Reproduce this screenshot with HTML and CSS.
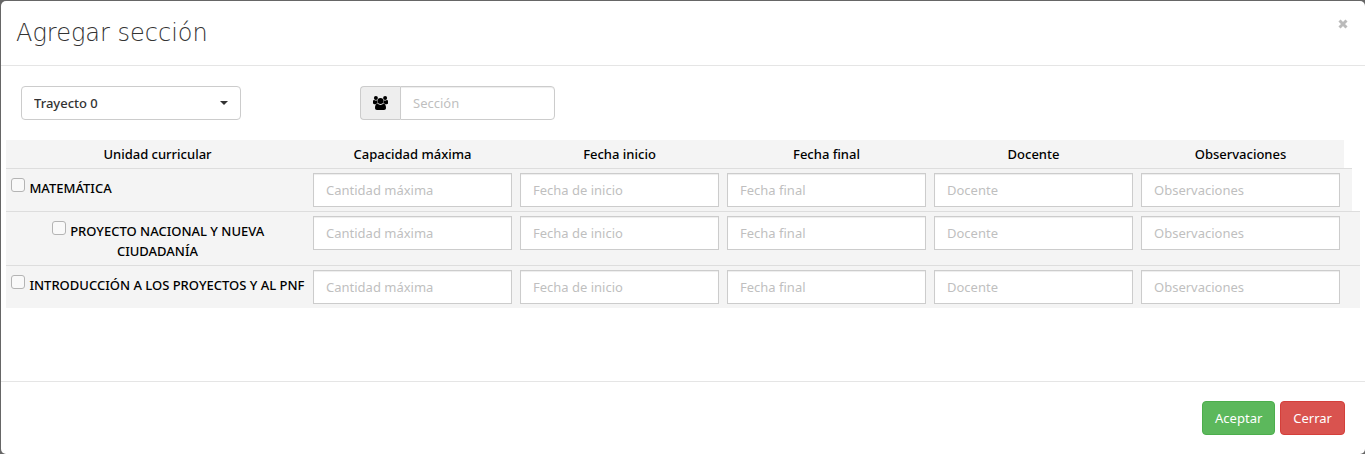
FILE: index.html
```
<!DOCTYPE html>
<html lang="es">
<head>
<meta charset="utf-8">
<title>Agregar sección</title>
<link rel="stylesheet" href="styles.css">
</head>
<body>
<div class="modal" role="dialog" aria-labelledby="modal-title">
  <header class="modal-header">
    <h1 class="modal-title" id="modal-title">Agregar sección</h1>
    <button class="close" type="button" aria-label="Cerrar ventana">
      <svg width="10" height="10" viewBox="0 0 10 10" aria-hidden="true"><path d="M1.500 1.500l7 7M8.500 1.500l-7 7" stroke="currentColor" stroke-width="3"/></svg>
    </button>
  </header>
  <main class="modal-body">
    <div class="filters">
      <div class="filter">
        <select class="select" aria-label="Trayecto"><option>Trayecto 0</option></select>
        <svg class="caret" width="8" height="4" viewBox="0 0 8 4" aria-hidden="true"><path d="M0 0h8L4 4z"/></svg>
      </div>
      <div class="input-group">
        <label class="addon" for="seccion" aria-label="Sección">
          <svg width="15" height="14" viewBox="0 0 15 14" aria-hidden="true">
            <circle cx="2.9" cy="2" r="2"/><circle cx="12.1" cy="2" r="2"/>
            <path d="M0 5.6C0 4.5.4 3.8 1.2 3.9 2.3 4.8 3.4 4.7 4.3 4.3 4.2 5.8 4.4 6.5 5 7.3 4 7.4 3.400 7.700 2.900 8.200H1.300C.5 8.200 0 7.800 0 7zM15 5.600C15 4.500 14.600 3.800 13.800 3.900 12.700 4.800 11.600 4.700 10.700 4.300 10.800 5.800 10.600 6.500 10 7.300 11 7.400 11.600 7.700 12.100 8.200H13.700C14.500 8.200 15 7.800 15 7z"/>
            <circle cx="7.500" cy="5" r="3"/>
            <path d="M4.500 7.800C6.500 9.300 8.500 9.300 10.500 7.800 12.300 7.800 13 9.800 13 12 13 13.300 12.200 14 11 14H4C2.800 14 2 13.300 2 12 2 9.800 2.700 7.800 4.500 7.800z"/>
          </svg>
        </label>
        <input class="control" id="seccion" type="text" placeholder="Sección">
      </div>
    </div>
    <table class="units">
      <colgroup><col class="col-unit"><col><col><col><col><col><col class="col-end"><col class="col-end"></colgroup>
      <thead>
        <tr><th>Unidad curricular</th><th>Capacidad máxima</th><th>Fecha inicio</th><th>Fecha final</th><th>Docente</th><th>Observaciones</th></tr>
      </thead>
      <tbody>
        <tr>
          <td><label class="unit"><input class="check" type="checkbox"> MATEMÁTICA</label></td>
          <td><input class="control" type="text" aria-label="Capacidad máxima" placeholder="Cantidad máxima"></td>
          <td><input class="control" type="text" aria-label="Fecha inicio" placeholder="Fecha de inicio"></td>
          <td><input class="control" type="text" aria-label="Fecha final" placeholder="Fecha final"></td>
          <td><input class="control" type="text" aria-label="Docente" placeholder="Docente"></td>
          <td><input class="control" type="text" aria-label="Observaciones" placeholder="Observaciones"></td>
          <td></td>
        </tr>
        <tr>
          <td><label class="unit unit-center"><input class="check" type="checkbox"> PROYECTO NACIONAL Y NUEVA CIUDADANÍA</label></td>
          <td><input class="control" type="text" aria-label="Capacidad máxima" placeholder="Cantidad máxima"></td>
          <td><input class="control" type="text" aria-label="Fecha inicio" placeholder="Fecha de inicio"></td>
          <td><input class="control" type="text" aria-label="Fecha final" placeholder="Fecha final"></td>
          <td><input class="control" type="text" aria-label="Docente" placeholder="Docente"></td>
          <td><input class="control" type="text" aria-label="Observaciones" placeholder="Observaciones"></td>
          <td></td><td></td>
        </tr>
        <tr>
          <td><label class="unit"><input class="check" type="checkbox"> INTRODUCCIÓN A LOS PROYECTOS Y AL PNF</label></td>
          <td><input class="control" type="text" aria-label="Capacidad máxima" placeholder="Cantidad máxima"></td>
          <td><input class="control" type="text" aria-label="Fecha inicio" placeholder="Fecha de inicio"></td>
          <td><input class="control" type="text" aria-label="Fecha final" placeholder="Fecha final"></td>
          <td><input class="control" type="text" aria-label="Docente" placeholder="Docente"></td>
          <td><input class="control" type="text" aria-label="Observaciones" placeholder="Observaciones"></td>
          <td></td><td></td>
        </tr>
      </tbody>
    </table>
  </main>
  <footer class="modal-footer">
    <button class="btn btn-success" type="button">Aceptar</button>
    <button class="btn btn-danger" type="button">Cerrar</button>
  </footer>
</div>
</body>
</html>
```
FILE: styles.css
```
* { box-sizing: border-box; }
body {
  margin: 0;
  padding: 1px 0 0 1px;
  background: #666;
  color: #000;
  font: 13px/20px "Noto Sans", "Open Sans", sans-serif;
}
input, select, button { font: inherit; }
.modal { background: #fff; border-radius: 5px; }
.modal-header {
  display: flex;
  justify-content: space-between;
  align-items: flex-start;
  padding: 16px 15px;
  border-bottom: 1px solid #e5e5e5;
}
.modal-title {
  margin: 0;
  color: #333;
  font: 200 24px/32px "DejaVu Sans", sans-serif;
}
.close {
  display: flex;
  margin: 0;
  padding: 2px;
  border: 0;
  background: none;
  color: #bbb;
}
.modal-body { padding: 20px 5px 73px; }
.filters {
  display: flex;
  gap: 119px;
  padding: 0 15px 20px;
}
.filter { position: relative; width: 220px; }
.select {
  width: 100%;
  height: 34px;
  padding: 0 12px;
  border: 1px solid #ccc;
  border-radius: 4px;
  background: #fff;
  color: #333;
  font-weight: 500;
  appearance: none;
}
.caret {
  position: absolute;
  top: 15px;
  right: 13px;
  fill: #333;
  pointer-events: none;
}
.input-group { display: flex; width: 195px; }
.addon {
  display: flex;
  align-items: center;
  padding: 0 12px;
  border: 1px solid #ccc;
  border-right: 0;
  border-radius: 4px 0 0 4px;
  background: #eee;
}
.control {
  display: block;
  width: 100%;
  height: 34px;
  padding: 0 12px;
  border: 1px solid #ccc;
  border-radius: 0;
  background: #fff;
  box-shadow: inset 0 1px 1px rgba(0, 0, 0, .075);
  color: #555;
}
.control::placeholder { color: #bfbfbf; opacity: 1; }
.input-group .control { flex: 1; min-width: 0; border-radius: 0 4px 4px 0; }
.units {
  width: 100%;
  table-layout: fixed;
  border-spacing: 0;
}
.col-unit { width: 303px; }
.col-end { width: 8px; }
.units th, .units td {
  padding: 4px;
  background: #f4f4f4;
  vertical-align: top;
}
.units th { font-weight: 500; }
.units td { border-top: 1px solid #ddd; }
.unit { display: block; padding-top: 5px; font-weight: 500; }
.unit-center { padding-left: 32px; padding-right: 32px; text-align: center; }
.check {
  width: 14px;
  height: 14px;
  margin: 0 1px;
  border: 1px solid #b4b4b4;
  border-radius: 3px;
  background: #f9f9f9;
  vertical-align: 1px;
  appearance: none;
}
.modal-footer {
  display: flex;
  justify-content: flex-end;
  gap: 5px;
  padding: 19px 20px;
  border-top: 1px solid #e5e5e5;
}
.btn {
  height: 34px;
  padding: 0 12px;
  border: 1px solid;
  border-radius: 4px;
  color: #fff;
}
.btn-success { background: #5cb85c; border-color: #4cae4c; }
.btn-danger { background: #d9534f; border-color: #d43f3a; }
```
